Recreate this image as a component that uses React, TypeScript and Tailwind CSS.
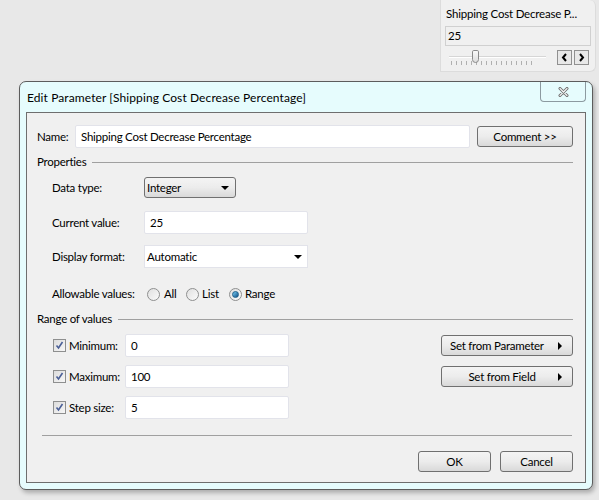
import React from "react";

const FONT = "font-['Lato','Liberation_Sans',sans-serif]";

function Btn({ label, className = "", arrow = false }: { label: string; className?: string; arrow?: boolean }) {
  return (
    <div
      className={`h-[21px] border border-[#707070] rounded-[3px] bg-gradient-to-b from-[#f4f4f4] via-[#ececec] to-[#d9d9d9] flex items-center justify-center relative whitespace-nowrap ${className}`}
    >
      <span>{label}</span>
      {arrow && (
        <span className="absolute right-[10px] top-[6px] w-0 h-0 border-y-[4px] border-y-transparent border-l-[4px] border-l-black" />
      )}
    </div>
  );
}

function Field({ value, className = "" }: { value: string; className?: string }) {
  return (
    <div className={`h-[23px] bg-white border border-[#e2e3ea] rounded-[2px] flex items-center px-[5px] ${className}`}>
      {value}
    </div>
  );
}

function Radio({ on = false }: { on?: boolean }) {
  return (
    <span className="w-[13px] h-[13px] rounded-full border border-[#8e8f8f] bg-gradient-to-br from-[#e0e0e0] to-[#fbfbfb] flex items-center justify-center">
      {on && <span className="w-[7px] h-[7px] rounded-full bg-gradient-to-br from-[#7ad0f5] to-[#0b4f86] border border-[#1c5f8a]" />}
    </span>
  );
}

function Check() {
  return (
    <span className="w-[13px] h-[13px] border border-[#8e8f8f] bg-gradient-to-br from-[#dcdcdc] to-[#f7f7f7] flex items-center justify-center">
      <svg width="9" height="9" viewBox="0 0 9 9">
        <path d="M1.5 4.5 L3.5 7 L7.5 1" fill="none" stroke="#4a5f97" strokeWidth="1.6" />
      </svg>
    </span>
  );
}

function Section({ title, lineStart, className = "" }: { title: string; lineStart: string; className?: string }) {
  return (
    <div className={`h-[16px] flex items-center ${className}`}>
      <span>{title}</span>
      <div className={`flex-1 h-px bg-[#a0a0a0] ${lineStart}`} />
    </div>
  );
}

function Widget() {
  return (
    <div className="ml-[440px] w-[156px] h-[72px] bg-[#f0f0f0] border border-[#dcdcdc] border-t-0 rounded-br-[6px] rounded-tr-[6px] px-[4px] pt-[6px] text-[11.5px] tracking-[-0.2px] leading-[16px]">
      <div className="h-[16px] pl-[1px] whitespace-nowrap">Shipping Cost Decrease P...</div>
      <div className="mt-[4px] h-[20px] border border-[#d0d0d0] flex items-center px-[2px]">25</div>
      <div className="mt-[4px] flex items-start">
        <div className="relative w-[100px] h-[16px] ml-[4px]">
          <div className="absolute left-0 right-[3px] top-[6px] h-[2px] bg-[#d6d6d6] border-b border-[#fff]" />
          <div className="absolute left-[2px] top-[11px] flex gap-[4px]">
            {Array.from({ length: 17 }).map((_, i) => (
              <span key={i} className="w-px h-[4px] bg-[#b0b0b0]" />
            ))}
          </div>
          <div className="absolute left-[23px] top-0 w-[7px] h-[13px] rounded-b-[4px] rounded-t-[2px] border border-[#8a8a8a] bg-gradient-to-b from-[#fafafa] to-[#dcdcdc]" />
        </div>
        <div className="ml-auto flex gap-[2px] mr-[2px]">
          <div className="w-[15px] h-[15px] border border-[#909090] bg-[#e8e8e8] flex items-center justify-center">
            <svg width="7" height="9" viewBox="0 0 7 9"><path d="M5 1 L2 4.5 L5 8" fill="none" stroke="#000" strokeWidth="2" /></svg>
          </div>
          <div className="w-[15px] h-[15px] border border-[#909090] bg-[#e8e8e8] flex items-center justify-center">
            <svg width="7" height="9" viewBox="0 0 7 9"><path d="M2 1 L5 4.5 L2 8" fill="none" stroke="#000" strokeWidth="2" /></svg>
          </div>
        </div>
      </div>
    </div>
  );
}

export default function App() {
  return (
    <div className={`w-[599px] h-[500px] bg-[#e8e8e8] overflow-hidden text-black ${FONT}`}>
      <Widget />
      <div className="ml-[19px] mt-[9px] w-[574px] h-[409px] rounded-[7px] border border-[#5c5c5c] bg-[#e6fcfd] shadow-[2px_3px_4px_rgba(0,0,0,0.25)] flex flex-col px-[6px] pb-[6px]">
        <div className="h-[30px] flex items-start relative">
          <span className="text-[12px] tracking-[0.1px] leading-[18px] mt-[7px] ml-[1px] whitespace-nowrap">Edit Parameter [Shipping Cost Decrease Percentage]</span>
          <div className="absolute right-0 top-0 w-[46px] h-[20px] border border-[#8c9aa0] border-t-0 rounded-b-[4px] bg-[#e6fcfd] flex items-center justify-center">
            <svg width="11" height="10" viewBox="0 0 11 10">
              <path d="M2 1.5 L9 8.5 M9 1.5 L2 8.5" stroke="#6e6e6e" strokeWidth="3" strokeLinecap="round" />
              <path d="M2 1.5 L9 8.5 M9 1.5 L2 8.5" stroke="#f4f4f4" strokeWidth="1.1" strokeLinecap="round" />
            </svg>
          </div>
        </div>
        <div className="flex-1 border border-[#6e6e6e] bg-[#f0f0f0] flex flex-col pl-[10px] pr-[12px] text-[11.5px] tracking-[-0.25px] leading-[16px] whitespace-nowrap">
          <div className="mt-[12px] h-[23px] flex items-center">
            <span className="w-[38px]">Name:</span>
            <Field value="Shipping Cost Decrease Percentage" className="w-[395px]" />
            <Btn label="Comment >>" className="ml-[7px] w-[96px]" />
          </div>
          <Section title="Properties" lineStart="ml-[6px]" className="mt-[6px]" />
          <div className="ml-[15px] flex flex-col">
            <div className="mt-[7px] h-[21px] flex items-center">
              <span className="w-[92px]">Data type:</span>
              <div className="w-[92px] h-[21px] border border-[#707070] rounded-[3px] bg-gradient-to-b from-[#f4f4f4] via-[#ececec] to-[#d9d9d9] flex items-center pl-[2px] pr-[6px]">
                <span className="flex-1">Integer</span>
                <span className="w-0 h-0 border-x-[4px] border-x-transparent border-t-[4px] border-t-black" />
              </div>
            </div>
            <div className="mt-[13px] h-[23px] flex items-center">
              <span className="w-[92px]">Current value:</span>
              <Field value="25" className="w-[164px]" />
            </div>
            <div className="mt-[11px] h-[23px] flex items-center">
              <span className="w-[92px]">Display format:</span>
              <div className="w-[164px] h-[23px] bg-white border border-[#e2e3ea] flex items-center pl-[2px] pr-[5px]">
                <span className="flex-1">Automatic</span>
                <span className="w-0 h-0 border-x-[4px] border-x-transparent border-t-[4px] border-t-black" />
              </div>
            </div>
            <div className="mt-[18px] h-[16px] flex items-center">
              <span className="w-[95px]">Allowable values:</span>
              <Radio />
              <span className="ml-[4px] w-[22px]">All</span>
              <Radio />
              <span className="ml-[3px] w-[27px]">List</span>
              <Radio on />
              <span className="ml-[3px]">Range</span>
            </div>
          </div>
          <Section title="Range of values" lineStart="ml-[6px]" className="mt-[9px]" />
          <div className="ml-[16px] flex">
            <div className="flex flex-col">
              {[
                ["Minimum:", "0"],
                ["Maximum:", "100"],
                ["Step size:", "5"],
              ].map(([l, v], i) => (
                <div key={l} className={`${i === 0 ? "mt-[7px]" : "mt-[8px]"} h-[23px] flex items-center`}>
                  <Check />
                  <span className="ml-[3px] w-[56px]">{l}</span>
                  <Field value={v} className="w-[164px]" />
                </div>
              ))}
            </div>
            <div className="ml-auto flex flex-col">
              <Btn label="Set from Parameter" arrow className="mt-[8px] w-[132px] justify-start pl-[8px]" />
              <Btn label="Set from Field" arrow className="mt-[10px] w-[132px] pr-[10px]" />
            </div>
          </div>
          <div className="mt-[16px] ml-[5px] mr-[1px] h-px bg-[#a0a0a0]" />
          <div className="mt-[15px] flex justify-end gap-[9px]">
            <Btn label="OK" className="w-[73px]" />
            <Btn label="Cancel" className="w-[73px]" />
          </div>
        </div>
      </div>
    </div>
  );
}
